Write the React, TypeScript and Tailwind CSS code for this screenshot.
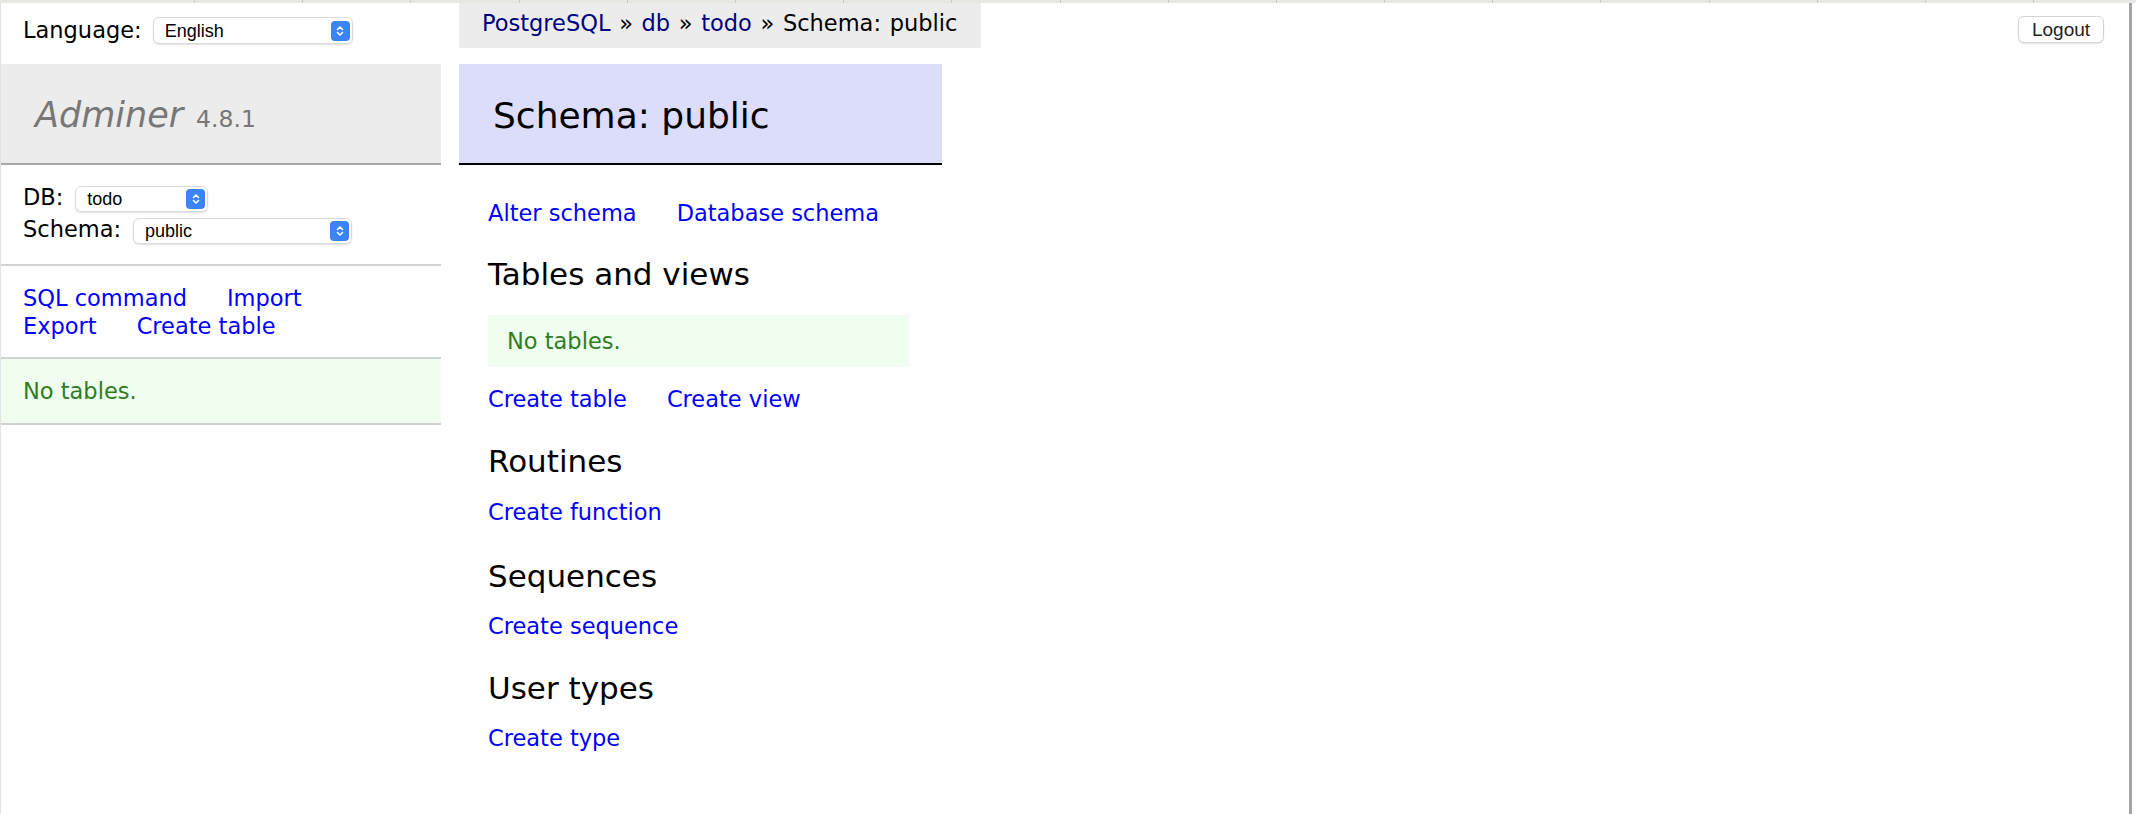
import React from 'react';

const TICKS = Array.from({ length: 18 });

function Chevrons() {
  return (
    <svg width="10" height="14" viewBox="0 0 10 14" fill="none" stroke="white" strokeWidth="1.6" strokeLinecap="round" strokeLinejoin="round">
      <path d="M2.5 5.5 L5 3 L7.5 5.5" />
      <path d="M2.5 8.5 L5 11 L7.5 8.5" />
    </svg>
  );
}

interface SelectProps {
  value: string;
  size: string;
}

function FakeSelect({ value, size }: SelectProps) {
  return (
    <div
      className={`${size} flex items-center justify-between rounded-[6px] bg-white border border-[#dadada] shadow-[0_1px_1.5px_rgba(0,0,0,0.12)] pl-[11px] pr-[2px] font-['Liberation_Sans',Arial,sans-serif] text-[18px] leading-none text-black`}
    >
      <span>{value}</span>
      <span className="w-[19px] h-[20px] rounded-[4px] bg-[#3c83f6] flex items-center justify-center">
        <Chevrons />
      </span>
    </div>
  );
}

function Links({ items }: { items: string[] }) {
  return (
    <div className="flex gap-[40px]">
      {items.map((t) => (
        <a key={t} className="text-[#0000ff] whitespace-nowrap">{t}</a>
      ))}
    </div>
  );
}

export default function App() {
  return (
    <div className="w-[2136px] h-[814px] overflow-hidden bg-white text-black font-['DejaVu_Sans',Verdana,sans-serif] text-[22.5px] leading-[28px]">
      {/* browser strip */}
      <div className="h-[3px] bg-[#e9e7e4] flex overflow-hidden">
        <div className="w-[194px] shrink-0" />
        {TICKS.map((_, i) => (
          <div key={i} className="w-[108.2px] shrink-0 border-l border-[#c9c6c2]" />
        ))}
      </div>

      <div className="flex h-[811px] mr-[4px] border-r-[3px] border-r-[#a3a3a3] border-l border-l-[#e3e3e3]">
        {/* Menu */}
        <aside className="w-[440px] shrink-0">
          <div className="h-[61px] pt-[13px] pl-[22px] flex items-start gap-[11px]">
            <span>Language:</span>
            <div className="mt-[1px]">
              <FakeSelect value="English" size="w-[200px] h-[27px]" />
            </div>
          </div>

          <div className="h-[101px] bg-[#ececec] border-b-2 border-[#a8a8a8] pt-[29px] pl-[34px] flex items-baseline gap-[13px]">
            <span className="italic text-[35px] leading-[45px] text-[#777]">Adminer</span>
            <span className="text-[23.5px] text-[#777]">4.8.1</span>
          </div>

          <div className="h-[101px] border-b-2 border-[#d2d2d2] pt-[18px] pl-[22px]">
            <div className="h-[32px] flex items-start gap-[12px]">
              <span>DB:</span>
              <div className="mt-[3px]">
                <FakeSelect value="todo" size="w-[133px] h-[26px]" />
              </div>
            </div>
            <div className="h-[32px] flex items-start gap-[12px]">
              <span>Schema:</span>
              <div className="mt-[3px]">
                <FakeSelect value="public" size="w-[219px] h-[26px]" />
              </div>
            </div>
          </div>

          <div className="h-[93px] border-b-2 border-[#d2d2d2] pt-[18px] pl-[22px]">
            <Links items={['SQL command', 'Import']} />
            <Links items={['Export', 'Create table']} />
          </div>

          <div className="h-[66px] bg-[#effeef] border-b-2 border-[#d2d2d2] pt-[18px] pl-[22px] text-[#2f7d23]">
            No tables.
          </div>
        </aside>

        {/* Content */}
        <main className="ml-[18px] flex flex-col shrink-0">
          <nav className="w-[522px] h-[45px] bg-[#ececec] pl-[23px] leading-[41px] whitespace-nowrap [word-spacing:1.5px]">
            <a className="text-[#000080]">PostgreSQL</a> » <a className="text-[#000080]">db</a> »{' '}
            <a className="text-[#000080]">todo</a> » Schema: public
          </nav>

          <h2 className="mt-[16px] w-[483px] h-[101px] bg-[#dcdcfb] border-b-2 border-black pt-[29px] pl-[34px] text-[36px] leading-[45px] font-normal">
            Schema: public
          </h2>

          <div className="pl-[29px]">
            <div className="mt-[34px]">
              <Links items={['Alter schema', 'Database schema']} />
            </div>

            <h3 className="mt-[28px] text-[31px] leading-[38px]">Tables and views</h3>
            <div className="mt-[22px] w-[421px] py-[12px] pl-[19px] bg-[#effeef] text-[#2f7d23]">No tables.</div>
            <div className="mt-[18px]">
              <Links items={['Create table', 'Create view']} />
            </div>

            <h3 className="mt-[29px] text-[31px] leading-[38px]">Routines</h3>
            <div className="mt-[18px]">
              <Links items={['Create function']} />
            </div>

            <h3 className="mt-[31px] text-[31px] leading-[38px]">Sequences</h3>
            <div className="mt-[17px]">
              <Links items={['Create sequence']} />
            </div>

            <h3 className="mt-[29px] text-[31px] leading-[38px]">User types</h3>
            <div className="mt-[17px]">
              <Links items={['Create type']} />
            </div>
          </div>
        </main>

        <div className="flex-1 flex justify-end items-start pt-[13px] pr-[25px]">
          <button className="w-[86px] h-[27px] rounded-[6px] border border-[#d4d4d4] bg-white shadow-[0_1px_1.5px_rgba(0,0,0,0.1)] font-['Liberation_Sans',Arial,sans-serif] text-[19px] leading-none text-[#222]">
            Logout
          </button>
        </div>
      </div>
    </div>
  );
}
